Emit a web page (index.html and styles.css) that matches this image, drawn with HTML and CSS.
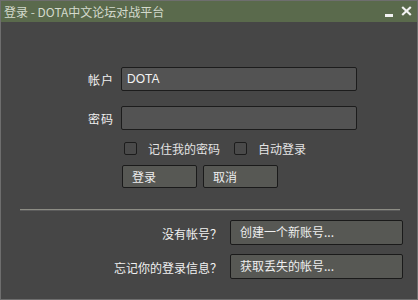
FILE: index.html
```html
<!DOCTYPE html>
<html>
<head>
<meta charset="utf-8">
<link rel="stylesheet" href="styles.css">
</head>
<body>
<div class="window">
  <div class="titlebar">
    <span class="title">登录 - DOTA中文论坛对战平台</span>
    <div class="winbtns">
      <span class="min"></span>
      <svg class="close" width="11" height="10" viewBox="0 0 11 10"><path d="M1.2 1 L9.8 9 M9.8 1 L1.2 9" stroke="#f2f2f2" stroke-width="2.2"/></svg>
    </div>
  </div>
  <div class="content">
    <div class="form">
      <div class="row">
        <label class="lbl">帐户</label>
        <div class="input">DOTA</div>
      </div>
      <div class="row">
        <label class="lbl">密码</label>
        <div class="input"></div>
      </div>
      <div class="checks">
        <span class="check"><span class="box"></span>记住我的密码</span>
        <span class="check"><span class="box"></span>自动登录</span>
      </div>
      <div class="buttons">
        <span class="btn">登录</span>
        <span class="btn">取消</span>
      </div>
    </div>
    <div class="sep"></div>
    <div class="links">
      <div class="lrow">
        <span class="llbl">没有帐号？</span>
        <span class="lbtn">创建一个新账号...</span>
      </div>
      <div class="lrow">
        <span class="llbl">忘记你的登录信息？</span>
        <span class="lbtn">获取丢失的帐号...</span>
      </div>
    </div>
  </div>
</div>
</body>
</html>
```
FILE: styles.css
```css
* { box-sizing: border-box; }
html, body { margin: 0; padding: 0; }
body {
  width: 418px; height: 300px; overflow: hidden;
  font-family: "Noto Sans CJK SC", "DejaVu Sans", sans-serif;
  font-size: 12px; color: #ececec; background: #464646;
}
.window {
  width: 418px; height: 300px;
  border: 1px solid #6e6e6e;
  background: #464646;
  display: flex; flex-direction: column;
}
.titlebar {
  height: 21px; background: #5a6a4c;
  display: flex; align-items: center; justify-content: space-between;
  padding: 0 5px 0 3px;
}
.title { color: #d4dacc; font-size: 12px; line-height: 21px; }
.winbtns { display: flex; align-items: center; gap: 8px; }
.min { width: 8px; height: 3px; background: #f2f2f2; margin-top: 8px; }
.close { display: block; margin-bottom: 2px; }
.content { flex: 1; display: flex; flex-direction: column; }
.form { padding-top: 45px; padding-left: 87px; display: flex; flex-direction: column; }
.row { display: flex; align-items: center; height: 24px; margin-bottom: 15px; }
.row + .row { margin-bottom: 0; }
.lbl { width: 33px; font-size: 12px; color: #f0f0f0; letter-spacing: 1px; }
.input {
  width: 236px; height: 24px;
  background: #535353; border: 1px solid #1c1c1c; border-radius: 2px;
  padding-left: 5px; line-height: 22px; font-family: "Liberation Sans", sans-serif; font-size: 12px; color: #f4f4f4;
}
.checks { display: flex; margin-top: 11px; margin-left: 36px; height: 14px; align-items: center; }
.check { display: flex; align-items: center; font-size: 12px; color: #e4e4e4; }
.check + .check { margin-left: 14px; }
.box { flex-shrink: 0; width: 13px; height: 13px; border: 1px solid #1c1c1c; border-radius: 2px; background: #4a4a4a; margin-right: 11px; }
.buttons { display: flex; gap: 6px; margin-top: 10px; margin-left: 34px; }
.btn {
  width: 75px; height: 23px; background: #575854; border: 1px solid #1a1a1a; border-radius: 2px;
  padding-left: 9px; line-height: 21px; font-size: 12px; color: #eee;
}
.sep { margin: 21px 17px 0 19px; height: 2px; border-top: 1px solid #8c8c84; border-bottom: 1px solid #5c5c5c; }
.links { display: flex; flex-direction: column; gap: 9px; margin-top: 9px; padding-right: 14px; }
.lrow { display: flex; justify-content: flex-end; align-items: center; }
.llbl { font-size: 12px; color: #f0f0f0; margin-right: 8px; margin-top: 2px; }
.lbtn {
  width: 173px; height: 25px; background: #575854; border: 1px solid #1a1a1a; border-radius: 2px;
  padding-left: 9px; line-height: 22px; font-size: 12px; color: #eee;
}
```
